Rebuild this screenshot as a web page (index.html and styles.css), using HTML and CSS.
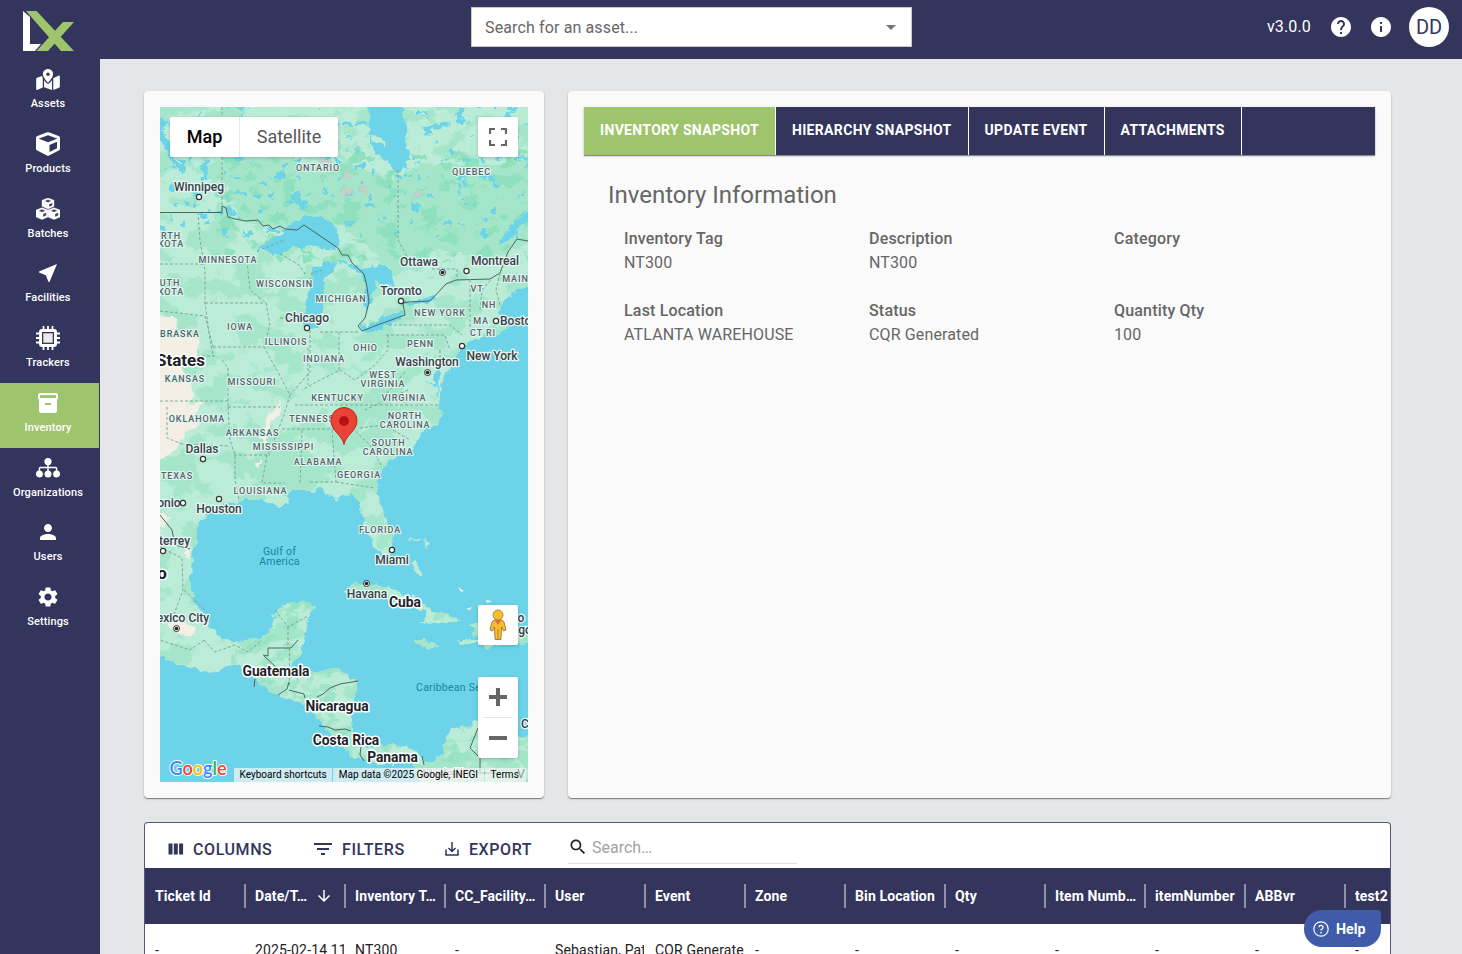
FILE: index.html
```html
<!DOCTYPE html>
<html lang="en">
<head>
<meta charset="utf-8">
<title>Inventory</title>
<link rel="stylesheet" href="styles.css">
</head>
<body>
<div class="app">
  <nav class="sidebar">
    <div class="logo">
      <svg width="52" height="40" viewBox="0 0 52 40"><path d="M0 0 7 6V33H18L12 40H0z" fill="#fff"/><path d="M3 0H13.500L51 40H38z" fill="#9fc56c"/><path d="M13.500 40H25L51 11H40z" fill="#9fc56c"/></svg>
    </div>
    <a class="nav-item"><span class="nav-icon"><svg width="24" height="21" viewBox="0 0 576 512"><path d="M288 0c-69.590 0-126 56.410-126 126 0 56.260 82.350 158.800 113.900 196.020 6.390 7.540 17.820 7.540 24.200 0C331.650 284.800 414 182.260 414 126 414 56.410 357.590 0 288 0zm0 168c-23.200 0-42-18.800-42-42s18.800-42 42-42 42 18.800 42 42-18.800 42-42 42zM20.120 215.950A32 32 0 0 0 0 245.660v250.320c0 11.320 11.430 19.060 21.940 14.860L160 448V214.920c-8.840-15.980-16.070-31.540-21.250-46.420L20.120 215.950zM288 359.670c-14.070 0-27.380-6.180-36.510-16.960-19.660-23.200-40.570-49.620-59.490-76.720v182l192 64V266c-18.920 27.090-39.820 53.520-59.490 76.720-9.130 10.770-22.440 16.950-36.510 16.950zm266.060-198.510L416 224v288l139.880-55.950A32 32 0 0 0 576 426.340V176.020c0-11.320-11.430-19.060-21.940-14.860z"/></svg></span>Assets</a>
    <a class="nav-item"><span class="nav-icon"><svg width="24" height="24" viewBox="0 0 512 512"><path id="cube" d="M239.100 6.300l-208 78c-18.700 7-31.100 25-31.100 45v225.100c0 18.200 10.300 34.800 26.500 42.900l208 104c13.500 6.800 29.400 6.800 42.900 0l208-104c16.300-8.100 26.500-24.800 26.500-42.900V129.300c0-20-12.400-37.900-31.100-44.900l-208-78C262 2.200 250 2.200 239.100 6.300zM256 68.400l192 72v1.100l-192 78-192-78v-1.100l192-72zm32 356V275.500l160-65v133.900l-160 80z"/></svg></span>Products</a>
    <a class="nav-item"><span class="nav-icon"><svg width="24" height="22" viewBox="0 0 24 22"><path d="M12 0 18 2.300V8.300L12 11 6 8.300V2.300zM8.400 3 12 4.500 15.600 3 12 1.600zM13 6.200V9L16.300 7.500V4.800zM6 9.800 11.900 12V19L6 21.600 0 19V12zM2.400 12.700 6 14.200 9.600 12.700 6 11.300zM7 15.900V19L10.300 17.500V14.500zM18 9.800 24 12V19L18 21.600 12.100 19V12zM14.400 12.700 18 14.200 21.600 12.700 18 11.300zM19 15.900V19L22.300 17.500V14.500z" fill-rule="evenodd" stroke="#fff" stroke-width=".4" stroke-linejoin="round"/></svg></span>Batches</a>
    <a class="nav-item"><span class="nav-icon"><svg width="24" height="24" viewBox="0 0 24 24"><path d="M21 3 3 10.530v.98l6.840 2.650L12.480 21h.98L21 3z"/></svg></span>Facilities</a>
    <a class="nav-item"><span class="nav-icon"><svg width="24" height="24" viewBox="0 0 24 24"><path fill-rule="evenodd" d="M6 3h12a3 3 0 0 1 3 3v12a3 3 0 0 1-3 3H6a3 3 0 0 1-3-3V6a3 3 0 0 1 3-3zm0 3v12h12V6z"/><path d="M7.300 7.300h9.400v9.400H7.300z" opacity=".9"/><path d="M7.500 0v4M12 0v4M16.500 0v4M7.500 20v4M12 20v4M16.500 20v4M0 7.500h4M0 12h4M0 16.500h4M20 7.500h4M20 12h4M20 16.500h4" stroke="#fff" stroke-width="1.800"/></svg></span>Trackers</a>
    <a class="nav-item active"><span class="nav-icon"><svg width="24" height="24" viewBox="0 0 24 24"><path d="M20 2H4c-1 0-2 .9-2 2v3.010c0 .72.430 1.340 1 1.690V20c0 1.100 1.100 2 2 2h14c.9 0 2-.9 2-2V8.700c.57-.35 1-.97 1-1.690V4c0-1.100-1-2-2-2zm-5 12H9v-2h6v2zm5-7H4V4h16V7z"/></svg></span>Inventory</a>
    <a class="nav-item"><span class="nav-icon"><svg width="24" height="20" viewBox="0 0 24 20"><circle cx="12" cy="3.600" r="3.600"/><circle cx="3.400" cy="16" r="3.500"/><circle cx="12" cy="16" r="3.500"/><circle cx="20.600" cy="16" r="3.500"/><path d="M12 6v8M3.400 14v-3.500q0-1 1-1h15.200q1 0 1 1V14" fill="none" stroke="#fff" stroke-width="1.500"/></svg></span>Organizations</a>
    <a class="nav-item"><span class="nav-icon"><svg width="24" height="24" viewBox="0 0 24 24"><path d="M12 12c2.210 0 4-1.790 4-4s-1.790-4-4-4-4 1.790-4 4 1.790 4 4 4zm0 2c-2.670 0-8 1.340-8 4v2h16v-2c0-2.660-5.330-4-8-4z"/></svg></span>Users</a>
    <a class="nav-item"><span class="nav-icon"><svg width="24" height="24" viewBox="0 0 24 24"><path d="M19.140 12.940c.04-.3.060-.61.060-.94 0-.32-.02-.64-.07-.94l2.030-1.580c.18-.14.230-.41.120-.61l-1.920-3.320c-.12-.22-.37-.29-.59-.22l-2.390.96c-.5-.38-1.030-.7-1.620-.94l-.36-2.540c-.04-.24-.24-.41-.48-.41h-3.840c-.24 0-.43.17-.47.410l-.36 2.540c-.59.240-1.130.570-1.620.94l-2.390-.96c-.22-.08-.47 0-.59.220L2.740 8.870c-.12.210-.08.470.12.610l2.030 1.580c-.05.3-.09.630-.09.940s.02.640.07.940l-2.030 1.580c-.18.140-.23.410-.12.610l1.920 3.320c.12.220.370.290.590.220l2.390-.96c.5.380 1.030.7 1.620.94l.36 2.540c.05.240.240.410.480.410h3.840c.24 0 .44-.17.470-.41l.36-2.540c.59-.24 1.130-.56 1.620-.94l2.390.96c.22.080.470 0 .59-.22l1.920-3.320c.12-.22.070-.47-.12-.61l-2.010-1.580zM12 15.600c-1.980 0-3.600-1.620-3.600-3.600s1.620-3.600 3.600-3.600 3.600 1.620 3.600 3.600-1.620 3.600-3.600 3.600z"/></svg></span>Settings</a>
  </nav>

  <div class="main">
    <header class="topbar">
      <div class="asset-search"><span>Search for an asset...</span><svg width="24" height="24" viewBox="0 0 24 24"><path d="m7 10 5 5 5-5z" fill="#757575"/></svg></div>
      <div class="top-right">
        <span class="version">v3.0.0</span>
        <svg width="24" height="24" viewBox="0 0 24 24"><path d="M12 2C6.480 2 2 6.480 2 12s4.480 10 10 10 10-4.480 10-10S17.520 2 12 2zm1 17h-2v-2h2v2zm2.070-7.750l-.9.920C13.450 12.900 13 13.500 13 15h-2v-.5c0-1.100.450-2.100 1.170-2.830l1.240-1.260c.37-.36.590-.86.590-1.410 0-1.100-.9-2-2-2s-2 .9-2 2H8c0-2.210 1.790-4 4-4s4 1.790 4 4c0 .88-.36 1.680-.93 2.250z"/></svg>
        <svg width="24" height="24" viewBox="0 0 24 24"><path d="M12 2C6.480 2 2 6.480 2 12s4.480 10 10 10 10-4.480 10-10S17.520 2 12 2zm1 15h-2v-6h2v6zm0-8h-2V7h2v2z"/></svg>
        <span class="avatar">DD</span>
      </div>
    </header>

    <div class="content">
      <div class="cards">
        <section class="card map-card">
          <div class="map">
            <svg class="map-art" width="368" height="675" viewBox="160 107 368 675">
              <defs>
                <clipPath id="land">
                  <path d="M150 97H540V289L517 289 508 296 503 302 499 312 502 320 508 326 498 334 483 336 465 343 459 351 452 364 448 374 446 368 442 381 440 394 439 405 442 417 436 425 427 429 421 434 413 448 402 455 391 462 383 469 378 476 377 491 382 506 386 521 392 534 393 550 390 560 383 556 374 545 364 529 362 511 359 501 351 495 344 493 336 499 329 496 322 490 305 491 290 491 283 493 290 501 289 506 280 506 269 504 261 500 244 500 228 502 220 508 209 514 199 521 196 530 196 543 192 556 191 572 191 590 196 604 205 620 217 633 228 642 239 642 248 639 266 636 273 622 276 610 286 605 311 602 316 608 308 618 306 633 303 644 299 657 292 665 290 672 310 672 326 670 344 671 357 682 356 694 352 707 351 721 352 731 357 742 367 747 382 745 402 745 416 752 424 762 432 762 443 752 445 739 452 728 465 728 475 721 487 725 500 736 540 737V792H422L415 770 409 758 400 755 395 765 380 764 365 760 351 755 340 744 329 733 319 720 307 704 292 700 274 693 260 684 248 671 237 664 224 668 208 673 188 667 160 657 150 655z"/>
                  <path d="M343 594 356 583 374 584 388 588 403 593 420 600 433 612 449 614 460 620 447 622 422 623 428 612 414 607 392 597 372 591 355 597z"/>
                  <path d="M413 641 425 640 438 645 428 648 416 645zM458 640 477 640 490 641 540 632V642L505 643 490 648 475 643 459 643zM470 623 487 623 487 636 475 634z"/>
                  <path d="M411 562 416 560 420 569 422 576 416 573zM408 539 420 538 420 540 408 541zM424 539 428 543 426 548z"/>
                </clipPath>
                <filter id="patches" x="0" y="0" width="100%" height="100%" color-interpolation-filters="sRGB">
                  <feTurbulence type="fractalNoise" baseFrequency=".03 .04" numOctaves="4" seed="11"/>
                  <feColorMatrix values="0 0 0 0 .647  0 0 0 0 .902  0 0 0 0 .796  16 0 0 0 -8.2"/>
                </filter>
                <filter id="woods" x="0" y="0" width="100%" height="100%" color-interpolation-filters="sRGB">
                  <feTurbulence type="fractalNoise" baseFrequency=".05 .08" numOctaves="4" seed="4"/>
                  <feColorMatrix values="0 0 0 0 .56  0 0 0 0 .88  0 0 0 0 .74  16 0 0 0 -9"/>
                </filter>
                <filter id="ponds" x="0" y="0" width="100%" height="100%" color-interpolation-filters="sRGB">
                  <feTurbulence type="fractalNoise" baseFrequency=".09 .11" numOctaves="3" seed="23"/>
                  <feColorMatrix values="0 0 0 0 .42  0 0 0 0 .83  0 0 0 0 .91  26 0 0 0 -17.500"/>
                </filter>
                <filter id="coast" filterUnits="userSpaceOnUse" x="150" y="97" width="388" height="695" color-interpolation-filters="sRGB">
                  <feTurbulence type="fractalNoise" baseFrequency=".12" numOctaves="3" seed="7" result="n"/>
                  <feDisplacementMap in="SourceGraphic" in2="n" scale="9" xChannelSelector="R" yChannelSelector="G"/>
                </filter>
              </defs>
              <rect x="160" y="107" width="368" height="675" fill="#6cd3e9"/>
              <g filter="url(#coast)"><g clip-path="url(#land)">
                <rect x="145" y="92" width="398" height="705" fill="#bbecd8"/>
                <path d="M220 165 270 150 330 175 360 165 390 180 420 165 500 165 540 150V240L490 260 440 250 390 265 340 225 290 230 240 220z" fill="#a5e6cb"/>
                <path d="M430 350 400 372 350 402 335 420 350 440 385 400 420 375zM240 470 262 450 300 440 330 480 290 500z" fill="#a5e6cb"/>
                <rect x="145" y="92" width="398" height="705" filter="url(#patches)"/>
                <rect x="215" y="150" width="325" height="112" filter="url(#woods)"/>
                <rect x="230" y="580" width="310" height="215" filter="url(#woods)" opacity=".6"/>
                <rect x="150" y="97" width="390" height="140" filter="url(#ponds)"/>
                <path d="M150 315 176 318 180 330 200 341 195 360 178 365 190 378 194 396 188 404 204 401 193 416 200 424 186 432 178 446 170 455 150 466zM268 413 282 402 280 414 272 422 266 445 261 440zM254 465 262 458 258 468zM150 500 170 520 160 530zM186 545 191 550 189 558 184 553zM168 622 180 618 196 630 190 637 175 632z" fill="#f3efe4"/>
                <g fill="#c3cfc8"><path d="M316 158 330 158 329 167 320 164zM344 175 351 167 350 180zM343 187 354 190 343 198zM360 182 370 192 362 194zM412 193 420 192 419 197 413 197z"/></g>
                <g fill="#6cd3e9">
                  <path d="M367 97 370 122 368 136 375 153 390 165 393 172 398 173 403 166 406 169 410 157 405 143 406 127 400 97z"/>
                  <path d="M257 251 270 241 282 236 289 224 300 221 303 215 327 219 336 227 341 240 335 250 315 248 305 247 292 247 282 254 268 251zM313 270 322 262 336 261 338 265 328 274 323 288 323 305 319 318 319 328 307 331 304 320 306 299 310 286zM338 260 350 265 370 268 384 265 393 276 395 285 386 286 376 280 372 298 367 312 362 302 366 287 361 273 349 267 340 264zM358 327 371 324 382 316 401 313 405 314 393 323 374 330 365 332zM402 302 420 301 432 293 436 297 430 304 402 306zM538 203 515 222 496 246 509 240 520 226 538 215z"/>
                  <path d="M160 118 168 120 164 130 170 143 175 160 182 172 175 168 165 148 160 140zM203 157 207 165 208 181 202 180 201 168zM292 194 299 190 302 196 299 206 293 203zM182 152 194 158 188 162zM420 127 430 126 438 122 452 125 440 128 432 131zM461 185 468 175 464 188zM480 216 489 219 485 223zM225 207 229 204 232 215 228 217zM235 107 248 107 240 112zM505 107 518 107 514 112z"/>
                  <path d="M434 365 440 373 438 398 435 380zM424 379 436 386 435 388z"/>
                </g>
                <path d="M371 138 379 136 386 143 385 146 372 141z" fill="#bbecd8"/>
              </g></g>
              <g fill="#f3efe4"><path d="M458 587 464 591 461 592zM466 609 472 607 470 610zM486 600 492 601 487 603z"/></g>
              <g class="border">
                <path d="M160 212.500H222V206L226 208 228 217 235 219 246 221 258 220 263 226 269 225 273 229 280 226 285 229 297 230 304 225 338 248 342 255 348 255 352 263 364 274 367 287 369 302 365 318 358 326 362 331 380 324 405 315 403 303 408 302 430 301 446 284 456 280 490 279 500 273 508 252 517 239 528 241M160 515 172 530 175 545 190 549M264 656 276 667M291 648H268V656L263 655M291 648 298 640M255 679 254 687M278 695 287 689 289 682M289 690 304 694 305 698M317 697 323 694 330 688 340 684 358 681M319 726 328 727 335 730 345 729 351 731M361 747 360 755 364 761M422 756 424 765M478 728 470 748 480 758V773H500"/>
              </g>
              <g class="state">
                <path d="M222 107V206M289.500 648V685M198 212 200 240 205 271V303L210 340 213 355M160 264H205M205 303H266M160 311 205 316 213 347M213 347H264M215 356H195M222 360 228 368V407M160 401H228M228 407H280M228 407 230 440 235 455V480L239 500M167 407V438L182 444 230 446M234 455H270M267 455 262 483H285M266 303 270 325 264 347 278 372 290 395 284 415 278 430 268 455M247 261 250 290 266 303M257 251 285 240M280 254 298 264 306 275M309 285 312 273 322 270M280 318H310M310 330V372L290 395M308 348V385M339 332V370M320 332H360M388 335V350L375 365 355 380 340 370 320 380 302 390M295 405H440M282 429H350M302 430 300 485M332 430 336 482H308M336 482 375 488M352 428 370 445 381 465M360 428 385 425 410 440M398 170V240L408 258M389 325H450L462 335M432 269H457V279M470 279V335M480 310 482 290 495 275M500 273 496 290 500 305M386 335H445L450 350M440 350V370M405 372 385 395M408 390 365 410M160 547 182 558 183 590 172 620M184 590 205 610M204 640 190 650 160 640M204 640 215 652 235 645 248 652 262 640M275 610 288 627 308 616M288 627V648"/>
              </g>
              <g class="states">
                <text x="318" y="171">ONTARIO</text><text x="471.500" y="175">QUEBEC</text>
                <text x="171" y="238.500">RTH</text><text x="171" y="247">KOTA</text><text x="228" y="263">MINNESOTA</text>
                <text x="170" y="286">UTH</text><text x="171" y="295">KOTA</text><text x="284.500" y="287">WISCONSIN</text>
                <text x="341" y="302">MICHIGAN</text><text x="240" y="330">IOWA</text><text x="180" y="337">BRASKA</text>
                <text x="286" y="345">ILLINOIS</text><text x="324" y="362">INDIANA</text><text x="365.500" y="351">OHIO</text>
                <text x="420.500" y="347">PENN</text><text x="440" y="316">NEW YORK</text><text x="477" y="292">VT</text>
                <text x="489" y="308">NH</text><text x="481" y="324">MA</text><text x="483" y="336">CT RI</text><text x="515.500" y="282">MAIN</text>
                <text x="185" y="382">KANSAS</text><text x="252" y="385">MISSOURI</text><text x="383" y="378">WEST</text><text x="383" y="387">VIRGINIA</text>
                <text x="337.500" y="401">KENTUCKY</text><text x="404" y="401">VIRGINIA</text><text x="197" y="422">OKLAHOMA</text>
                <text x="318" y="422">TENNESSEE</text><text x="405" y="419">NORTH</text><text x="405" y="428">CAROLINA</text>
                <text x="252.500" y="436">ARKANSAS</text><text x="283.500" y="450">MISSISSIPPI</text><text x="388.500" y="446">SOUTH</text><text x="388" y="455">CAROLINA</text>
                <text x="318" y="465">ALABAMA</text><text x="359" y="478">GEORGIA</text><text x="177" y="479">TEXAS</text><text x="260.500" y="494">LOUISIANA</text><text x="380" y="533">FLORIDA</text>
              </g>
              <g class="cities">
                <text x="199" y="191">Winnipeg</text><text x="419" y="266">Ottawa</text><text x="495" y="265">Montreal</text>
                <text x="401" y="295">Toronto</text><text x="307" y="322">Chicago</text><text x="500" y="325" class="from">Boston</text>
                <text x="427" y="366">Washington</text><text x="492" y="360">New York</text><text x="202" y="453">Dallas</text>
                <text x="219" y="513">Houston</text><text x="169" y="507">onio</text><text x="174.500" y="545">terrey</text>
                <text x="392" y="564">Miami</text><text x="367" y="598">Havana</text><text x="183" y="622">exico City</text>
                <text x="521" y="622">o</text><text x="525" y="634">go</text><text x="525" y="728">C</text>
              </g>
              <g class="dots"><circle cx="199" cy="197" r="2.600"/><circle cx="466.500" cy="271" r="2.600"/><circle cx="401" cy="301" r="2.600"/><circle cx="307" cy="328" r="2.600"/><circle cx="496" cy="321" r="2.600"/><circle cx="462" cy="346" r="2.600"/><circle cx="203" cy="459" r="2.600"/><circle cx="219" cy="499" r="2.600"/><circle cx="183" cy="503" r="2.600"/><circle cx="163" cy="551" r="2.600"/><circle cx="392" cy="550" r="2.600"/></g>
              <g class="capitals"><circle cx="442.500" cy="272.500" r="3"/><circle cx="427.500" cy="372.500" r="3"/><circle cx="366.500" cy="583.500" r="3"/><circle cx="176.500" cy="628.500" r="3"/></g>
              <g class="cores"><circle cx="442.500" cy="272.500" r="1.800"/><circle cx="427.500" cy="372.500" r="1.800"/><circle cx="366.500" cy="583.500" r="1.800"/><circle cx="176.500" cy="628.500" r="1.800"/></g>
              <g class="countries"><text x="180.500" y="366">States</text><text x="162" y="579" class="wide">o</text><text x="405" y="607">Cuba</text><text x="276" y="676">Guatemala</text><text x="337" y="711">Nicaragua</text><text x="346" y="745">Costa Rica</text><text x="392.500" y="762">Panama</text></g>
              <g class="seas"><text x="279.500" y="555">Gulf of</text><text x="279.500" y="565">America</text><text x="451.500" y="691">Caribbean Sea</text></g>
              <path d="M344 444.500C342.500 435 331 431 331 420.500A13 13 0 0 1 357 420.500C357 431 345.500 435 344 444.500z" fill="#ea4335" stroke="#c5221f"/><circle cx="344" cy="421" r="5" fill="#b31412"/>
              <g class="google"><text x="169.500" y="775" textLength="57" lengthAdjust="spacingAndGlyphs"><tspan fill="#4285f4">G</tspan><tspan fill="#ea4335">o</tspan><tspan fill="#fbbc04">o</tspan><tspan fill="#4285f4">g</tspan><tspan fill="#34a853">l</tspan><tspan fill="#ea4335">e</tspan></text></g>
              <text class="faint" x="422" y="778">Medellín</text>
            </svg>
            <div class="map-type"><span class="on">Map</span><span>Satellite</span></div>
            <div class="ctl full"><svg width="18" height="18" viewBox="0 0 18 18"><path d="M1 6V1h5M12 1h5v5M17 12v5h-5M6 17H1v-5" fill="none" stroke="#666" stroke-width="2.200"/></svg></div>
            <div class="ctl pegman"><svg width="20" height="32" viewBox="0 0 20 32"><path d="M6 11h8l2 2 2 8-2.500 1-2-4-.5 12.500H7L6.500 18l-2 4L2 21l2-8z" fill="#fbbc2c" stroke="#8a6a3a" stroke-width=".8"/><path d="m6.500 11 3.500 5 3.500-5z" fill="#e37435"/><path d="M10 20v10" stroke="#b98528"/><circle cx="10" cy="6" r="5" fill="#fbbc2c" stroke="#8a7a50" stroke-width=".8"/></svg></div>
            <div class="zoomer"><span><svg width="18" height="18"><path d="M0 9h18M9 0v18" stroke="#666" stroke-width="4"/></svg></span><i></i><span><svg width="18" height="18"><path d="M0 9h18" stroke="#666" stroke-width="4"/></svg></span></div>
            <div class="legal"><span>Keyboard shortcuts</span><span>Map data ©2025 Google, INEGI</span><span>Terms</span></div>
            <svg class="edge-label" width="12" height="14" viewBox="0 0 12 14"><text x="1" y="10">V</text></svg>
          </div>
        </section>

        <section class="card info-card">
          <div class="tabs"><span class="tab on">INVENTORY SNAPSHOT</span><span class="tab">HIERARCHY SNAPSHOT</span><span class="tab">UPDATE EVENT</span><span class="tab">ATTACHMENTS</span></div>
          <h2>Inventory Information</h2>
          <dl class="facts">
            <div><dt>Inventory Tag</dt><dd>NT300</dd></div>
            <div><dt>Description</dt><dd>NT300</dd></div>
            <div><dt>Category</dt><dd></dd></div>
            <div><dt>Last Location</dt><dd>ATLANTA WAREHOUSE</dd></div>
            <div><dt>Status</dt><dd>CQR Generated</dd></div>
            <div><dt>Quantity Qty</dt><dd>100</dd></div>
          </dl>
        </section>
      </div>

      <section class="grid">
        <div class="toolbar">
          <span class="tool columns"><svg width="16" height="12" viewBox="0 0 16 12"><path d="M.5.5h4v11h-4zM5.800.5h4v11h-4zM11.100.5h4v11h-4z"/></svg>COLUMNS</span>
          <span class="tool filters"><svg width="18" height="12" viewBox="0 0 18 12"><path d="M0 0h18v2H0zM3 5h12v2H3zM7 10h4v2H7z"/></svg>FILTERS</span>
          <span class="tool export"><svg width="14" height="14" viewBox="0 0 14 14"><path d="M1 7.500V13h12V7.500M7 0v9M3.500 6 7 9.400 10.500 6" fill="none" stroke="#33355c" stroke-width="1.500"/></svg>EXPORT</span>
          <span class="quick"><svg width="20" height="20" viewBox="0 0 24 24"><path d="M15.500 14h-.79l-.28-.27C15.410 12.590 16 11.110 16 9.500 16 5.910 13.090 3 9.500 3S3 5.910 3 9.500 5.910 16 9.500 16c1.610 0 3.090-.59 4.230-1.570l.27.280v.79l5 4.990L20.490 19l-4.990-5zm-6 0C7.010 14 5 11.990 5 9.500S7.010 5 9.500 5 14 7.010 14 9.500 11.990 14 9.500 14z"/></svg>Search…</span>
        </div>
        <div class="row head">
          <span>Ticket Id</span><span>Date/T…<svg width="18" height="18" viewBox="0 0 24 24"><path d="m20 12-1.410-1.410L13 16.170V4h-2v12.170l-5.580-5.590L4 12l8 8z"/></svg></span><span>Inventory T…</span><span>CC_Facility…</span><span>User</span><span>Event</span><span>Zone</span><span>Bin Location</span><span>Qty</span><span>Item Numb…</span><span>itemNumber</span><span>ABBvr</span><span>test2</span>
        </div>
        <div class="row body">
          <span>-</span><span>2025-02-14 11</span><span>NT300</span><span>-</span><span>Sebastian, Patrick</span><span>CQR Generated</span><span>-</span><span>-</span><span>-</span><span>-</span><span>-</span><span>-</span><span>-</span>
        </div>
      </section>
    </div>
  </div>
</div>
<div class="help"><svg width="16" height="16" viewBox="0 0 16 16"><circle cx="8" cy="8" r="7.200" fill="none" stroke="#fff" stroke-width="1.200"/><path d="M6 6.300a2 2 0 1 1 2.900 1.800Q8 8.600 8 9.600" fill="none" stroke="#fff" stroke-width="1.300"/><circle cx="8" cy="11.700" r=".85" fill="#fff"/></svg>Help</div>
</body>
</html>
```
FILE: styles.css
```css
* { box-sizing: border-box; }
body { margin: 0; height: 954px; overflow: hidden; background: #e5e6e8; font-family: Roboto, sans-serif; color: #666; }
.app { display: flex; height: 954px; overflow: hidden; }
.sidebar { flex: 0 0 100px; background: #33355c; }
.logo { height: 59px; padding: 11px 0 0 23px; }
.logo svg { display: block; }
.nav-item { display: flex; flex-direction: column; align-items: center; width: 99px; height: 64.75px; padding: 8px 3px 0 0; color: #fff; font-size: 11px; font-weight: 500; line-height: 14px; letter-spacing: .13px; }
.nav-item.active { background: #9fc56c; }
.nav-icon { display: flex; align-items: center; height: 24px; margin-bottom: 6px; }
.nav-icon svg, .top-right svg { display: block; fill: #fff; }
.main { flex: 1; min-width: 0; }
.topbar { display: flex; align-items: center; justify-content: space-between; height: 59px; padding: 0 13px 5px 371px; background: #33355c; }
.asset-search { display: flex; align-items: center; justify-content: space-between; width: 441px; height: 40px; padding: 0 8px 0 13px; background: #fff; border: 1px solid #c8c8cc; font-size: 16px; letter-spacing: .13px; }
.top-right { display: flex; align-items: center; color: #fff; }
.version { margin: -2px 18px 0 0; font-size: 16px; letter-spacing: .15px; }
.top-right svg + svg { margin: 0 16px; }
.avatar { display: flex; align-items: center; justify-content: center; width: 40px; height: 40px; border-radius: 50%; background: #fff; color: #33355c; font-size: 20px; }
.content { padding: 32px 71px 0 44px; }
.cards { display: flex; gap: 24px; height: 707px; margin-bottom: 24px; }
.card { padding: 16px; border-radius: 4px; background: #fafafa; box-shadow: 0 1px 1px rgba(0,0,0,.4), 0 1px 3px rgba(0,0,0,.12); }
.map-card { flex: 0 0 400px; }
.info-card { flex: 1; }
.map { position: relative; width: 368px; height: 675px; overflow: hidden; }
.map-art { display: block; }
.map-art text { text-anchor: middle; paint-order: stroke; stroke-linejoin: round; }
.border { fill: none; stroke: #4b6660; stroke-width: 1; }
.state { fill: none; stroke: #79a092; stroke-width: .9; stroke-dasharray: 3 2; }
.states text { font-size: 9px; font-weight: 500; letter-spacing: .9px; fill: #52636b; stroke: #e2f6ee; stroke-width: 2.2px; }
.cities text { font-size: 12px; font-weight: 500; fill: #37424a; stroke: #e8f7f3; stroke-width: 2.5px; }
.cities .from { text-anchor: start; }
.countries text { font-size: 13.8px; font-weight: 700; fill: #1c2329; stroke: #fff; stroke-width: 3px; }
.countries text:first-child { font-size: 17px; }
.countries .wide { font-size: 17px; }
.seas text { font-size: 10.5px; fill: #1884a3; letter-spacing: .25px; }
.dots circle { fill: #fff; stroke: #333; stroke-width: 1.2; }
.capitals circle { fill: #fff; stroke: #333; stroke-width: 1; }
.cores circle { fill: #222; }
.map-art .google text { text-anchor: start; font: 600 19px Lato, sans-serif; stroke: #fff; stroke-width: 2px; }
.map-art .faint { text-anchor: start; font-size: 12.500px; fill: #777; stroke: #fff; stroke-width: 2px; }
.edge-label { position: absolute; right: 0; bottom: 0; }
.edge-label text { font-size: 12.500px; fill: #8b9a9a; }
.map-type { position: absolute; left: 10px; top: 10px; display: flex; height: 40px; border-radius: 2px; background: #fff; box-shadow: 0 1px 4px -1px rgba(0,0,0,.3); font-size: 18px; line-height: 40px; color: #565656; }
.map-type span { width: 98px; text-align: center; }
.map-type .on { width: 70px; border-right: 1px solid #e6e6e6; color: #000; font-weight: 500; }
.ctl { position: absolute; right: 10px; display: flex; align-items: center; justify-content: center; width: 40px; height: 40px; border-radius: 2px; background: #fff; box-shadow: 0 1px 4px -1px rgba(0,0,0,.3); }
.full { top: 10px; }
.pegman { top: 498px; }
.zoomer { position: absolute; right: 10px; top: 570px; display: flex; flex-direction: column; align-items: center; width: 40px; height: 81px; border-radius: 2px; background: #fff; box-shadow: 0 1px 4px -1px rgba(0,0,0,.3); }
.zoomer span { display: flex; flex: 1; align-items: center; }
.zoomer i { width: 30px; height: 1px; background: #e6e6e6; }
.legal { position: absolute; left: 74px; bottom: 0; display: flex; gap: 1px; height: 14px; color: #000; font-size: 10px; line-height: 14px; white-space: nowrap; letter-spacing: .03px; }
.legal span { padding: 0 5.500px; background: rgba(245,245,245,.7); }
.legal span:last-child { padding: 0 7px 0 6px; }
.tabs { display: flex; height: 48px; background: #33355c; box-shadow: 0 1px 1px rgba(0,0,0,.4), 0 1px 3px rgba(0,0,0,.12); }
.tab { padding: 0 16px; border-right: 1px solid #fff; color: #fff; font-size: 14px; font-weight: 700; line-height: 46px; letter-spacing: .33px; white-space: nowrap; }
.tab.on { background: #9fc56c; }
.info-card h2 { margin: 24px 0 0 24px; font-size: 24px; font-weight: 400; line-height: 32px; }
.facts { display: grid; grid-template-columns: repeat(3, 245px); margin: 16px 0 0 40px; font-size: 16px; line-height: 24px; letter-spacing: .13px; }
.facts > div { height: 72px; }
.facts dt { font-weight: 500; letter-spacing: .18px; }
.facts dd { margin: 0; }
.grid { height: 132px; overflow: hidden; border: 1px solid #55577f; border-bottom: 0; border-radius: 4px 4px 0 0; background: #fff; }
.toolbar { display: flex; height: 45px; padding: 8px 0 0 23px; color: #33355c; }
.tool { display: flex; align-items: center; height: 36px; gap: 10px; font-size: 16px; font-weight: 500; letter-spacing: .58px; }
.tool svg { fill: #33355c; }
.columns { width: 146px; gap: 9px; }
.filters { width: 131px; }
.export { width: 123px; }
.quick { display: flex; align-items: center; gap: 4px; width: 229px; height: 33px; border-bottom: 1px solid #e0e0e0; color: #a2a2a2; font-size: 16px; }
.quick svg { fill: #222; }
.row { display: flex; width: 1300px; }
.row span { flex: 0 0 100px; padding-left: 10px; white-space: nowrap; overflow: hidden; }
.head { height: 56px; align-items: center; background: #33355c; color: #fff; font-size: 14px; font-weight: 700; letter-spacing: .12px; }
.head span { position: relative; left: 1px; display: flex; align-items: center; height: 24px; padding-left: 9px; border-right: 2px solid #8e90a5; }
.head svg { margin-left: 8px; fill: #fff; }
.body { height: 52px; font-size: 14px; line-height: 52px; color: #212121; letter-spacing: .15px; }
.body span { border-right: 1px solid #fff; }
.help { position: fixed; left: 1304px; top: 910px; display: flex; align-items: center; gap: 7px; width: 77px; height: 37px; padding-left: 9px; border-radius: 18px 4px 18px 18px; background: #3f5ba9; color: #fff; font-size: 14.200px; font-weight: 700; }
```
